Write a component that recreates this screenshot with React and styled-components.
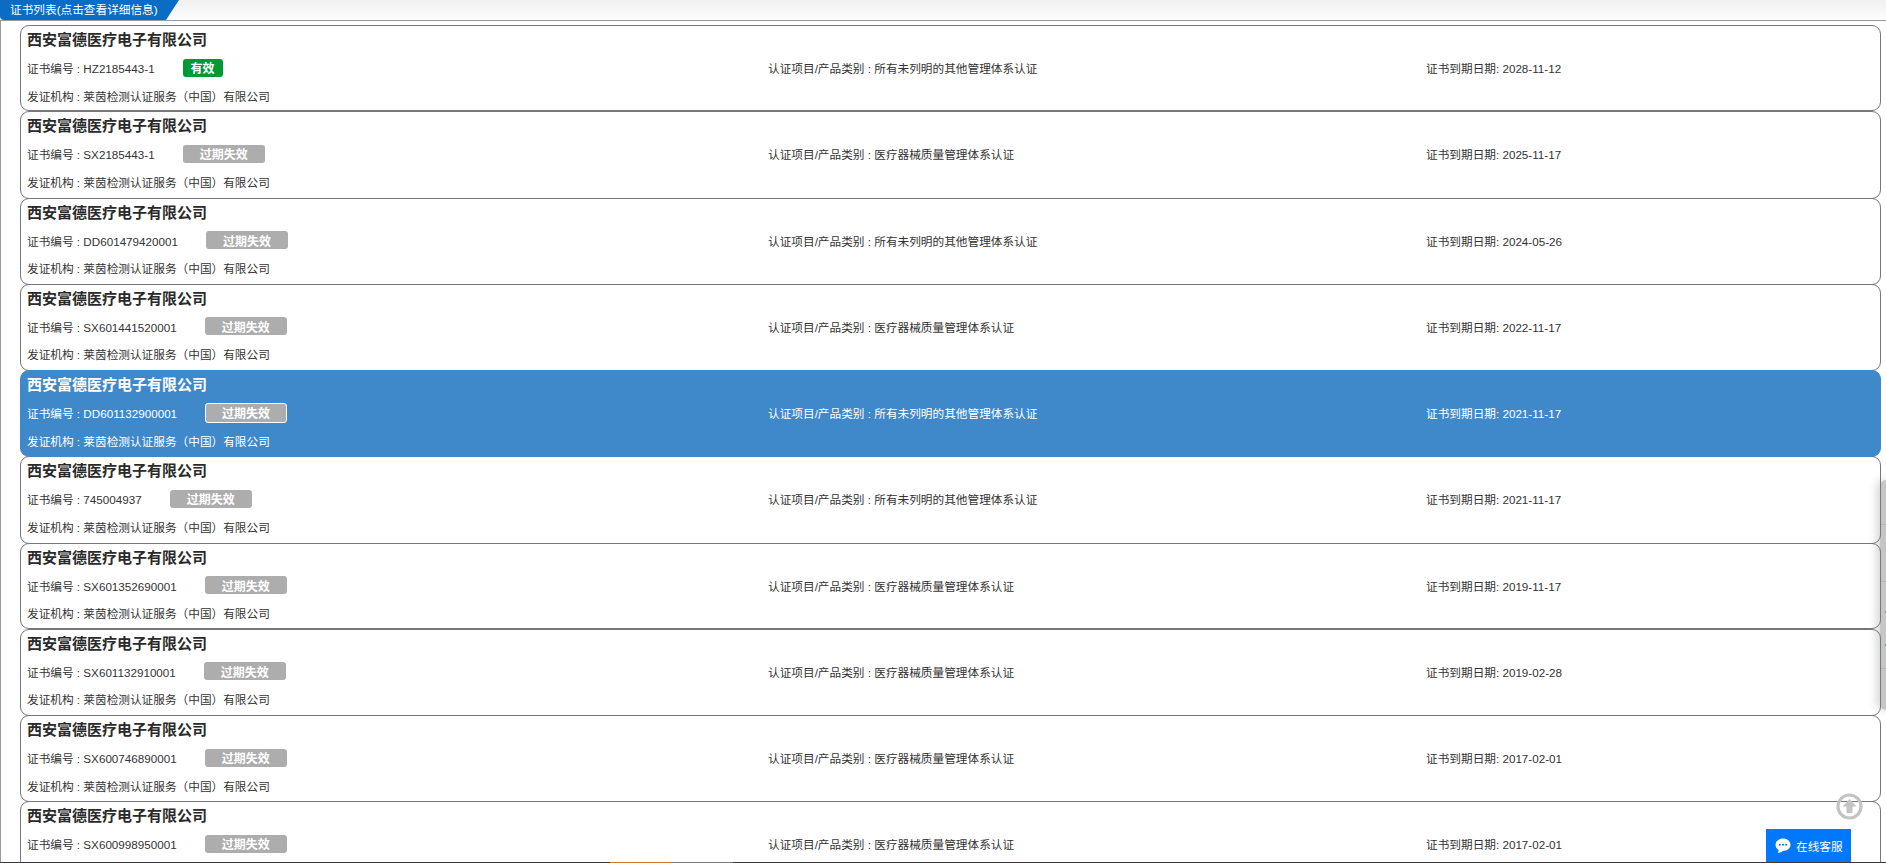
import React from "react";
import styled, { createGlobalStyle } from "styled-components";

const Global = createGlobalStyle`
  html, body { margin: 0; padding: 0; background: #fff; height: 863px; overflow: hidden; }
  body { font-family: "Liberation Sans", "Noto Sans CJK SC", sans-serif; color: #333; }
  * { box-sizing: border-box; }
`;

const Page = styled.div`
  position: relative;
  width: 1886px;
  height: 863px;
  overflow: hidden;
`;

const HeaderBar = styled.div`
  height: 21px;
  background: linear-gradient(180deg, #f0f0f0 0%, #fdfdfd 100%);
  border-bottom: 1px solid #999;
`;

const HeaderTab = styled.div`
  width: 179px;
  height: 20px;
  padding-left: 10px;
  background: #0a6cc4;
  color: #fff;
  font-size: 11.67px;
  line-height: 19px;
  border-bottom-left-radius: 4px;
  clip-path: polygon(0 0, 100% 0, 166px 100%, 0 100%);
  white-space: nowrap;
`;

const Body = styled.div`
  border-left: 1px solid #999;
  padding: 4px 5px 0 19px;
`;

const Card = styled.div`
  position: relative;
  height: ${p => (p.$seam ? 86.25 : 87.25)}px;
  margin-bottom: ${p => (p.$seam ? 0 : -1)}px;
  padding: 0 6px;
  border: 1px solid ${p => (p.$active ? "#3f88c9" : "#777")};
  border-radius: 9px;
  background: ${p => (p.$active ? "#3f88c9" : "transparent")};
  color: ${p => (p.$active ? "#fff" : "#333")};
  z-index: ${p => (p.$active ? 1 : 0)};
`;

const Title = styled.div`
  height: 27.5px;
  font-size: 15px;
  font-weight: bold;
  line-height: 28px;
  color: ${p => (p.$active ? "#fff" : "#2a2a2a")};
  white-space: nowrap;
`;

const Grid = styled.div`
  display: grid;
  grid-template-columns: 741px 658px 1fr;
  height: 28px;
  align-items: center;
  font-size: 11.67px;
  white-space: nowrap;
`;

const NumberCell = styled.div`
  display: flex;
  align-items: center;
`;

const Badge = styled.span`
  display: inline-flex;
  align-items: center;
  justify-content: center;
  width: ${p => (p.$valid ? 40 : 82)}px;
  height: ${p => (p.$active ? 20 : 18)}px;
  margin-left: 28px;
  border-radius: 3px;
  border: ${p => (p.$active ? "1px solid #fff" : "none")};
  background: ${p => (p.$valid ? "#009a35" : "#adadad")};
  color: #fff;
  font-size: 12px;
  font-weight: bold;
`;

const Issuer = styled.div`
  height: 29px;
  font-size: 11.67px;
  line-height: 30px;
  white-space: nowrap;
`;

const SidePanel = styled.div`
  position: absolute;
  left: 1880px;
  top: 480px;
  width: 12px;
  height: 230px;
  border-radius: 6px;
  background: #c6c6c6;
  box-shadow: -3px 0 10px rgba(0, 0, 0, 0.18);
`;

const PanelLine = styled.div`
  height: 1px;
  margin-top: ${p => p.$gap}px;
  background: #b4b4b4;
`;

const PanelSpeck = styled.span`
  position: absolute;
  left: 5px;
  top: ${p => p.$top}px;
  width: 1px;
  height: 2px;
  background: ${p => p.$c};
`;

const List = styled.div`
  position: relative;
`;

const ToTop = styled.div`
  position: absolute;
  left: 1836px;
  top: 793px;
  width: 27px;
  height: 27px;
  z-index: 3;
`;

const Chat = styled.div`
  position: absolute;
  left: 1766px;
  top: 829px;
  width: 85px;
  height: 33px;
  display: flex;
  align-items: center;
  gap: 5px;
  padding-left: 9px;
  background: #0078fb;
  color: #fff;
  font-size: 11.67px;
  z-index: 3;
`;

const BottomStrip = styled.div`
  position: absolute;
  left: 0;
  right: 0;
  bottom: 0;
  height: 1px;
  display: flex;
  z-index: 4;
  background: #3a3a3a;
`;

const StripPart = styled.div`
  width: ${p => p.$w}px;
  margin-left: ${p => p.$ml || 0}px;
  background: ${p => p.$c};
`;

const data = [
  { no: "HZ2185443-1", cat: "所有未列明的其他管理体系认证", date: "2028-11-12", valid: true, seam: true },
  { no: "SX2185443-1", cat: "医疗器械质量管理体系认证", date: "2025-11-17" },
  { no: "DD601479420001", cat: "所有未列明的其他管理体系认证", date: "2024-05-26" },
  { no: "SX601441520001", cat: "医疗器械质量管理体系认证", date: "2022-11-17" },
  { no: "DD601132900001", cat: "所有未列明的其他管理体系认证", date: "2021-11-17", active: true },
  { no: "745004937", cat: "所有未列明的其他管理体系认证", date: "2021-11-17" },
  { no: "SX601352690001", cat: "医疗器械质量管理体系认证", date: "2019-11-17", seam: true },
  { no: "SX601132910001", cat: "医疗器械质量管理体系认证", date: "2019-02-28" },
  { no: "SX600746890001", cat: "医疗器械质量管理体系认证", date: "2017-02-01" },
  { no: "SX600998950001", cat: "医疗器械质量管理体系认证", date: "2017-02-01", noIssuer: true },
];

export default function App() {
  return (
    <Page>
      <Global />
      <HeaderBar>
        <HeaderTab>证书列表(点击查看详细信息)</HeaderTab>
      </HeaderBar>
      <SidePanel>
        <PanelLine $gap={44} />
        <PanelLine $gap={56} />
        <PanelLine $gap={86} />
        <PanelSpeck $top={131} $c="#3aa0e0" />
        <PanelSpeck $top={164} $c="#30b080" />
      </SidePanel>
      <Body>
        <List>
          {data.map(({ no, cat, date, valid, active, seam, noIssuer }) => (
            <Card key={no} $active={active} $seam={seam}>
              <Title $active={active}>西安富德医疗电子有限公司</Title>
              <Grid>
                <NumberCell>
                  证书编号 : {no}
                  <Badge $valid={valid} $active={active}>{valid ? "有效" : "过期失效"}</Badge>
                </NumberCell>
                <div>认证项目/产品类别 : {cat}</div>
                <div>证书到期日期: {date}</div>
              </Grid>
              {!noIssuer && <Issuer>发证机构 : 莱茵检测认证服务（中国）有限公司</Issuer>}
            </Card>
          ))}
        </List>
      </Body>
      <ToTop>
        <svg width="27" height="27" viewBox="0 0 27 27">
          <circle cx="13.5" cy="13.5" r="11.5" fill="none" stroke="#c4c4c4" strokeWidth="3.2" />
          <path d="M13.5 6 L20.5 13.5 H16.5 V20 H10.5 V13.5 H6.5 Z" fill="#c4c4c4" />
        </svg>
      </ToTop>
      <Chat>
        <svg width="16" height="15" viewBox="0 0 16 15">
          <path d="M8 0.5 C12.2 0.5 15.5 3.2 15.5 6.8 C15.5 10.4 12.2 13 8 13 C6.6 14.2 4.6 14.8 2.6 14.8 C3.4 14 3.8 12.9 3.7 11.9 C1.8 10.8 0.5 9 0.5 6.8 C0.5 3.2 3.8 0.5 8 0.5 Z" fill="#fff" />
          <circle cx="4.8" cy="6.8" r="1" fill="#0078fb" />
          <circle cx="8" cy="6.8" r="1" fill="#0078fb" />
          <circle cx="11.2" cy="6.8" r="1" fill="#0078fb" />
        </svg>
        在线客服
      </Chat>
      <BottomStrip>
        <StripPart $ml={610} $w={61} $c="#c07a35" />
        <StripPart $w={62} $c="#777" />
      </BottomStrip>
    </Page>
  );
}
